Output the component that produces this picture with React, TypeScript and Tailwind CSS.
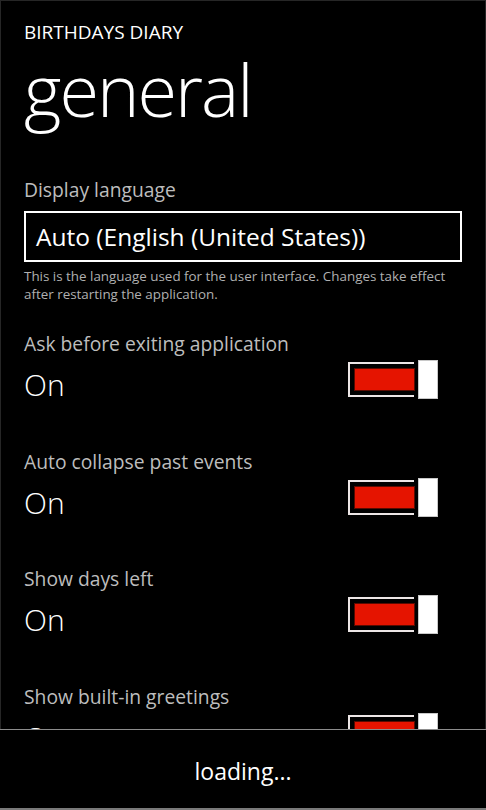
import React from "react";

const FONT = { fontFamily: '"Open Sans", "Noto Sans", sans-serif' };

function Toggle() {
  return (
    <div className="flex items-center gap-[4px]">
      <div className="flex h-[35px] w-[66px] items-center border-2 border-r-0 border-[#ece6e6] pl-[5px]">
        <div className="h-[21px] flex-1 bg-[#e51400] shadow-[0_0_0_1px_#5a0a00]" />
      </div>
      <div className="h-[39px] w-[20px] border border-[#c8c8c8] bg-white" />
    </div>
  );
}

function SettingRow({ label }: { label: string }) {
  return (
    <div className="h-[117.7px] shrink-0">
      <div className="text-[19.3px] leading-[24px] text-[#bdbdbd]">{label}</div>
      <div className="mt-[4px] flex items-start justify-between pr-[24px]">
        <div className="mt-[5px] text-[30px] font-light leading-[40px] text-white">On</div>
        <Toggle />
      </div>
    </div>
  );
}

export default function App() {
  return (
    <div
      className="relative h-[810px] w-[486px] overflow-hidden bg-black text-white shadow-[inset_0_0_0_1px_#262626]"
      style={FONT}
    >
      <div className="flex flex-col px-[24px] pt-[20px]">
        <div className="text-[19px] leading-[24px] text-white">BIRTHDAYS DIARY</div>
        <div className="mt-[15px] text-[72px] font-light leading-[60px] tracking-[-2px] text-white">
          general
        </div>
        <div className="mt-[59px] text-[19.3px] leading-[24px] text-[#bdbdbd]">
          Display language
        </div>
        <div className="mt-[9px] flex h-[51px] w-[438px] items-center border-2 border-white pl-[10px]">
          <span className="text-[24.5px] leading-[32px] text-white">
            Auto (English (United States))
          </span>
        </div>
        <div className="mt-[5px] whitespace-nowrap text-[13.4px] leading-[18px] text-[#b0b0b0]">
          <div>This is the language used for the user interface. Changes take effect</div>
          <div>after restarting the application.</div>
        </div>
        <div className="mt-[29px] flex flex-col">
          <SettingRow label="Ask before exiting application" />
          <SettingRow label="Auto collapse past events" />
          <SettingRow label="Show days left" />
          <SettingRow label="Show built-in greetings" />
        </div>
      </div>
      <div className="absolute bottom-0 left-0 flex h-[81px] w-[486px] items-start justify-center border-t border-b-2 border-t-[#8c8c8c] border-b-[#7a7a7a] bg-black">
        <span className="mt-[26px] text-[23px] leading-[30px] text-white">loading...</span>
      </div>
    </div>
  );
}
